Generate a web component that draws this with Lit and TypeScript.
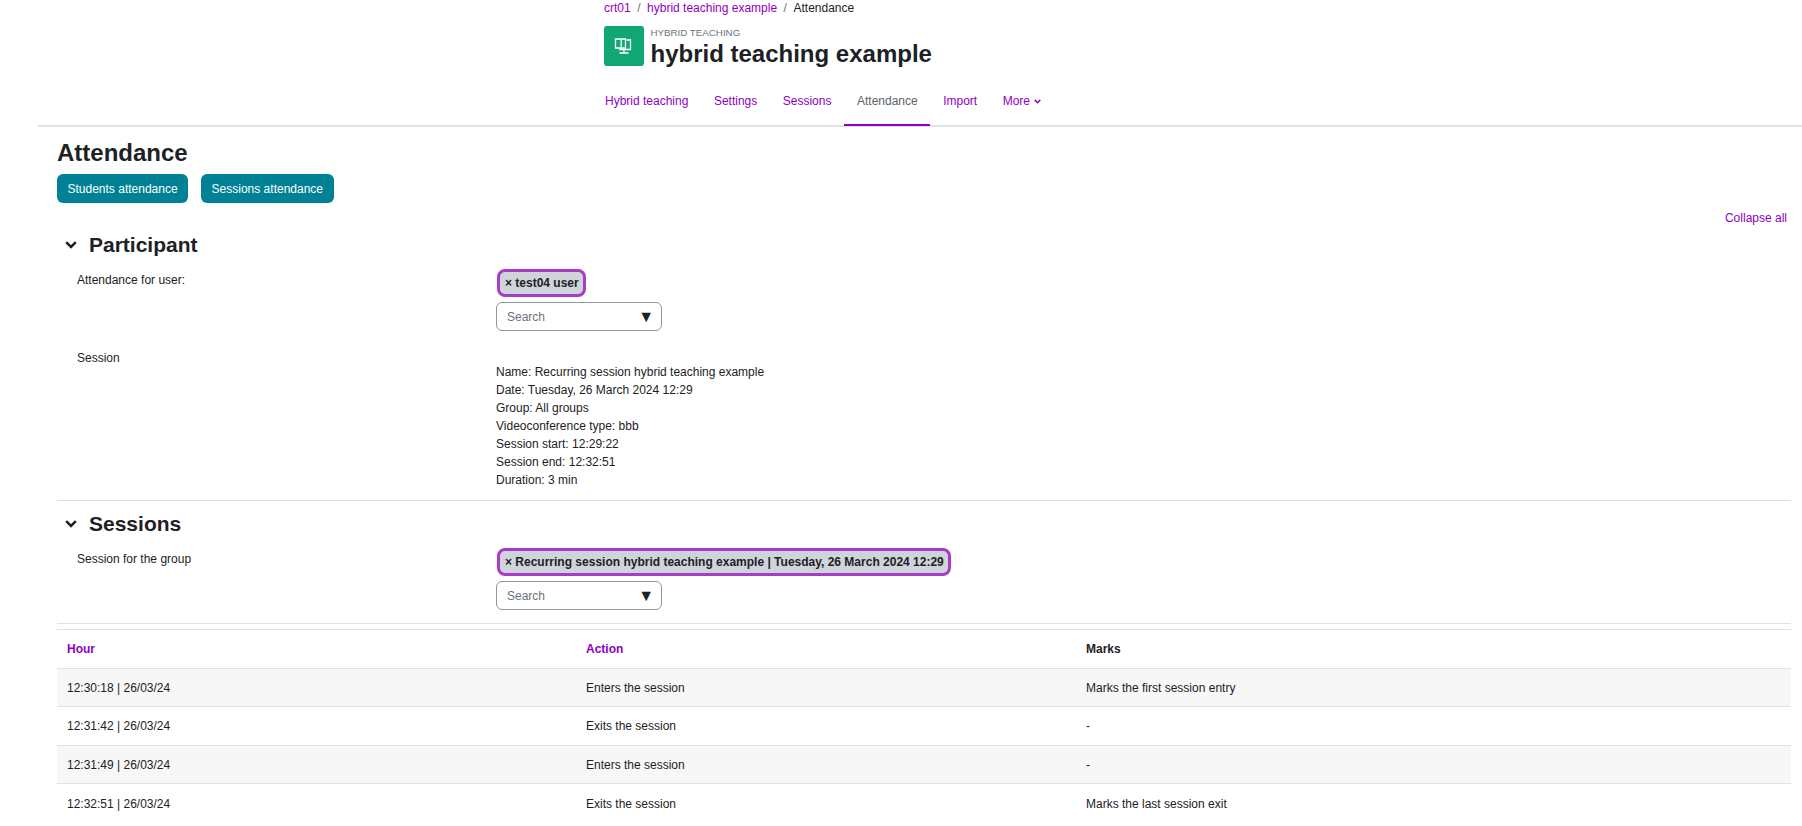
import { LitElement, html, css } from "lit";
import { customElement } from "lit/decorators.js";

const chevron = html`<svg class="chev" viewBox="0 0 12 8" aria-hidden="true"><path d="M1.2 1.200 6 6l4.800-4.800" fill="none" stroke="currentColor" stroke-width="2.500"/></svg>`;

const rows = [
  ["12:30:18 | 26/03/24", "Enters the session", "Marks the first session entry"],
  ["12:31:42 | 26/03/24", "Exits the session", "-"],
  ["12:31:49 | 26/03/24", "Enters the session", "-"],
  ["12:32:51 | 26/03/24", "Exits the session", "Marks the last session exit"],
];

@customElement("app-root")
export class AppRoot extends LitElement {
  static styles = css`
    :host { display: block; height: 826px; overflow: hidden; background: #fff; color: #1d2125;
      font-family: "Liberation Sans", Arial, sans-serif; font-size: 12px; line-height: 18px; }
    a { color: #8f00bf; text-decoration: none; }
    .head { padding-left: 604px; }
    .crumbs { display: flex; gap: 6.5px; height: 16px; line-height: 16px; margin-bottom: 10px; }
    .crumbs .sep { color: #6a737b; }
    .title { display: flex; gap: 6.5px; height: 40px; }
    .icon { width: 40px; height: 40px; border-radius: 3px; background: #11a676; display: flex; align-items: center; justify-content: center; flex: none; }
    .pre { font-size: 9.75px; line-height: 12px; color: #6a737b; margin-top: 1px; text-transform: uppercase; }
    h1 { margin: 0; font-size: 24px; line-height: 29px; font-weight: 700; }
    .tabbar { margin-left: 38px; border-bottom: 2px solid #e2e2e6; height: 58px; margin-top: 1px; padding-left: 566px; display: flex; }
    .tab { padding: 0 12.75px; height: 57px; line-height: 68px; display: block; margin-bottom: -1px; }
    .tab.first { padding-left: 1px; }
    .tab.active { color: #5b636b; border-bottom: 2px solid #8f00bf; }
    .tab .chev { width: 7px; height: 5px; vertical-align: 1px; margin-left: 1px; }
    .main { margin-left: 57px; margin-right: 11px; }
    h2 { margin: 0; font-size: 24px; line-height: 29px; font-weight: 700; padding-top: 11px; }
    .btns { display: flex; gap: 13px; margin-top: 7px; }
    .btn { background: #008196; color: #fff; border-radius: 6px; height: 29px; line-height: 30px; padding: 0 10.5px; }
    .collapse { text-align: right; margin-top: 5px; margin-right: 4px; height: 20px; line-height: 20px; }
    .sec-h { display: flex; align-items: center; height: 30px; font-size: 21px; font-weight: 700; margin-top: 2px; }
    .sec-h .chev { margin-left: 8px; margin-right: 12px; width: 12px; height: 8px; flex: none; }
    .row { display: grid; grid-template-columns: 419px 1fr; padding-left: 20px; margin-top: 9px; }
    .row.tight { margin-top: 16px; }
    .label { padding-top: 2px; }
    .chip { display: inline-block; background: #ced4da; border: 3px solid #a93cc6; border-radius: 8px; font-weight: 700; height: 22px; line-height: 23px; padding: 0 4.500px 0 5px; white-space: nowrap; margin-left: 1px; }
    .search { width: 166px; height: 29px; box-sizing: border-box; border: 1px solid #8f959e; border-radius: 6px; display: flex; justify-content: space-between; align-items: center; padding: 0 7px 0 10px; color: #6a737b; margin-top: 5px; }
    .search b { color: #1d2125; font-size: 16px; font-weight: 400; }
    .info { margin-top: 16px; }
    .hr { border-top: 1px solid #dee2e6; }
    .hr.a { margin-top: 11px; }
    .hr.b { margin-top: 13px; }
    .hr.c { margin-top: 5px; }
    .sec-h.second { margin-top: 8px; }
    table { width: 100%; border-collapse: collapse; table-layout: fixed; }
    th, td { text-align: left; padding: 1px 10px 0; height: 38.4px; border-bottom: 1px solid #dee2e6; box-sizing: border-box; }
    th { font-weight: 700; }
    tbody tr:last-child td { border-bottom: none; }
    tbody tr:nth-child(odd) { background: #f7f7f7; }
  `;

  render() {
    return html`
      <div class="head">
        <div class="crumbs"><a>crt01</a><span class="sep">/</span><a>hybrid teaching example</a><span class="sep">/</span><span>Attendance</span></div>
        <div class="title">
          <div class="icon">
            <svg viewBox="0 0 20 20" width="20" height="20" fill="none" stroke="#fff" stroke-width="1.3">
              <path d="M1.500 3h4.500c.7 0 1 .3 1.200.8.2-.5.5-.8 1.200-.8h3.100v9H8.500c-.7 0-1 .2-1.300.6-.3-.4-.6-.6-1.300-.6H1.500z M7.200 4v8.500"/>
              <path d="M12.500 4h4v9.500H5 M10 13.500v3 M5.500 17h9"/>
            </svg>
          </div>
          <div>
            <div class="pre">Hybrid teaching</div>
            <h1>hybrid teaching example</h1>
          </div>
        </div>
      </div>
      <div class="tabbar">
        <a class="tab first">Hybrid teaching</a>
        <a class="tab">Settings</a>
        <a class="tab">Sessions</a>
        <a class="tab active">Attendance</a>
        <a class="tab">Import</a>
        <a class="tab">More ${chevron}</a>
      </div>
      <div class="main">
        <h2>Attendance</h2>
        <div class="btns"><a class="btn">Students attendance</a><a class="btn">Sessions attendance</a></div>
        <div class="collapse"><a>Collapse all</a></div>
        <div class="sec-h">${chevron}<span>Participant</span></div>
        <div class="row">
          <div class="label">Attendance for user:</div>
          <div>
            <div><span class="chip">× test04 user</span></div>
            <div class="search"><span>Search</span><b>▼</b></div>
          </div>
        </div>
        <div class="row tight">
          <div class="label">Session</div>
          <div class="info">
            Name: Recurring session hybrid teaching example<br>
            Date: Tuesday, 26 March 2024 12:29<br>
            Group: All groups<br>
            Videoconference type: bbb<br>
            Session start: 12:29:22<br>
            Session end: 12:32:51<br>
            Duration: 3 min
          </div>
        </div>
        <div class="hr a"></div>
        <div class="sec-h second">${chevron}<span>Sessions</span></div>
        <div class="row">
          <div class="label">Session for the group</div>
          <div>
            <div><span class="chip">× Recurring session hybrid teaching example | Tuesday, 26 March 2024 12:29</span></div>
            <div class="search"><span>Search</span><b>▼</b></div>
          </div>
        </div>
        <div class="hr b"></div>
        <div class="hr c"></div>
        <table>
          <colgroup><col style="width:519px"><col style="width:500px"><col></colgroup>
          <thead><tr><th><a>Hour</a></th><th><a>Action</a></th><th>Marks</th></tr></thead>
          <tbody>${rows.map((r) => html`<tr><td>${r[0]}</td><td>${r[1]}</td><td>${r[2]}</td></tr>`)}</tbody>
        </table>
      </div>
    `;
  }
}
